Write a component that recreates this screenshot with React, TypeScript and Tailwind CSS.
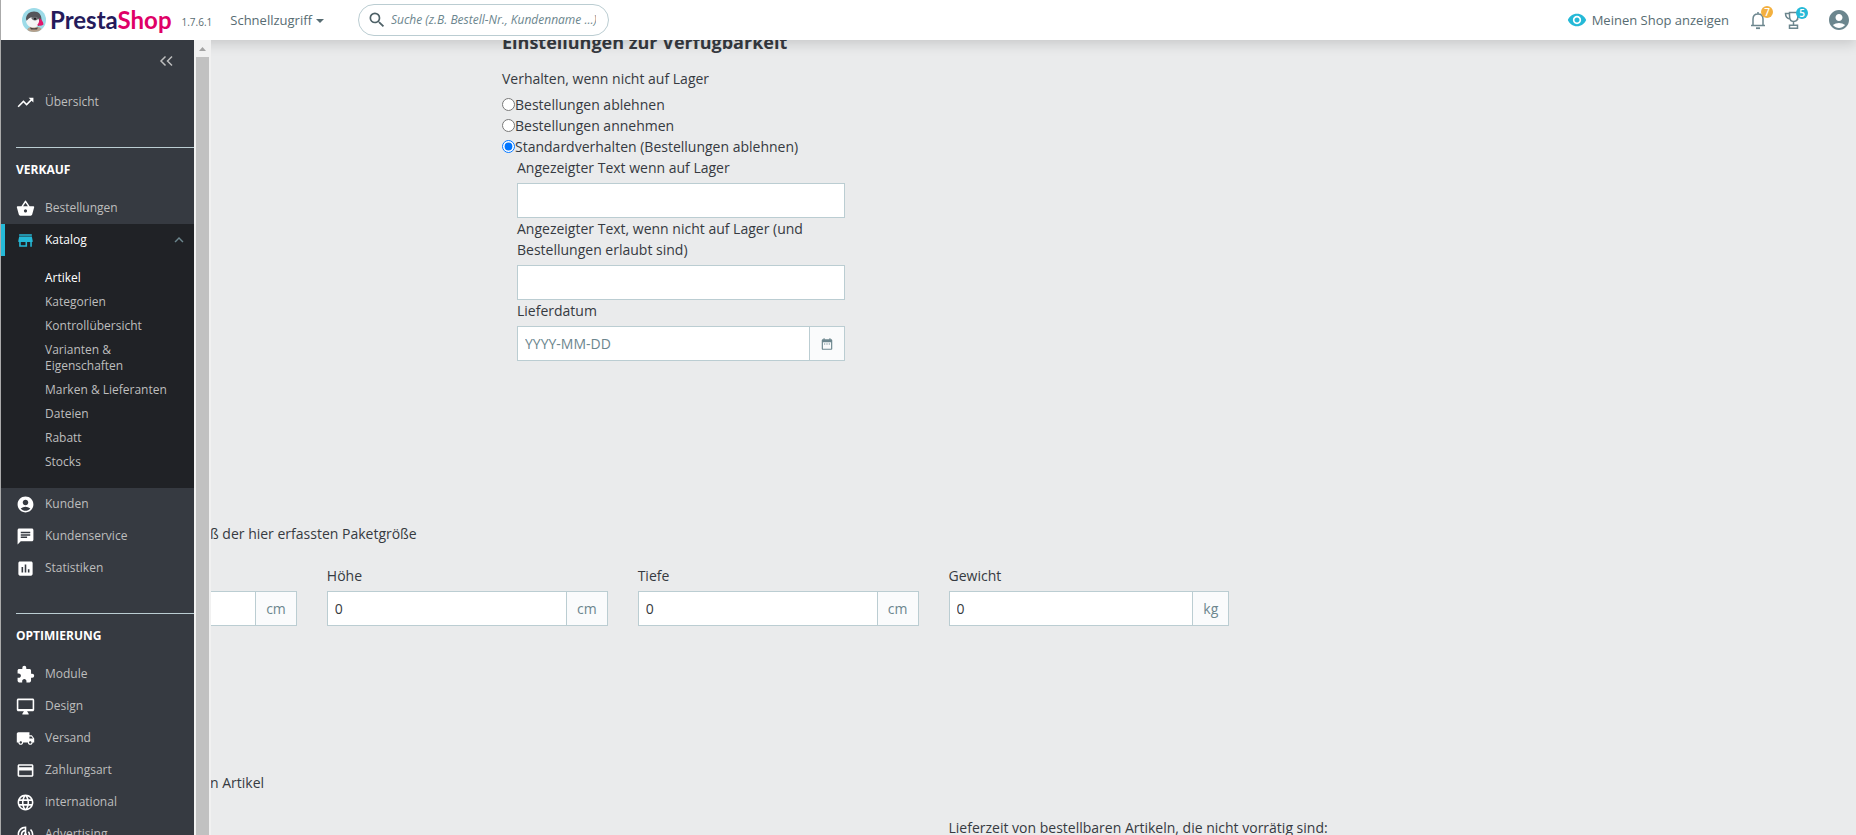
import { useState } from "react";
import type { ComponentType, ReactNode } from "react";
import {
  MdAccountCircle,
  MdAssessment,
  MdChat,
  MdDateRange,
  MdExtension,
  MdKeyboardArrowUp,
  MdLanguage,
  MdLocalShipping,
  MdPayment,
  MdRemoveRedEye,
  MdSearch,
  MdShoppingBasket,
  MdStore,
  MdTrackChanges,
  MdTrendingUp,
} from "react-icons/md";

interface IconProps {
  size?: number;
  className?: string;
}

interface NavItem {
  label: string;
  icon: ComponentType<IconProps>;
  children?: string[];
}

function DesktopIcon({ size = 24, className }: IconProps) {
  return (
    <svg viewBox="0 0 24 24" width={size} height={size} className={className} fill="currentColor">
      <path
        fillRule="evenodd"
        d="M21 2H3c-1.100 0-2 .9-2 2v12c0 1.100.9 2 2 2h7l-2 3v1h8v-1l-2-3h7c1.100 0 2-.9 2-2V4c0-1.100-.9-2-2-2zM21 15H3V4h18z"
      />
    </svg>
  );
}

const saleItems: NavItem[] = [
  { label: "Bestellungen", icon: MdShoppingBasket },
  {
    label: "Katalog",
    icon: MdStore,
    children: [
      "Artikel",
      "Kategorien",
      "Kontrollübersicht",
      "Varianten & Eigenschaften",
      "Marken & Lieferanten",
      "Dateien",
      "Rabatt",
      "Stocks",
    ],
  },
  { label: "Kunden", icon: MdAccountCircle },
  { label: "Kundenservice", icon: MdChat },
  { label: "Statistiken", icon: MdAssessment },
];

const improveItems: NavItem[] = [
  { label: "Module", icon: MdExtension },
  { label: "Design", icon: DesktopIcon },
  { label: "Versand", icon: MdLocalShipping },
  { label: "Zahlungsart", icon: MdPayment },
  { label: "international", icon: MdLanguage },
  { label: "Advertising", icon: MdTrackChanges },
];

const dimensions = [
  { id: "height", label: "Höhe", unit: "cm" },
  { id: "depth", label: "Tiefe", unit: "cm" },
  { id: "weight", label: "Gewicht", unit: "kg" },
];

const stockOptions = [
  "Bestellungen ablehnen",
  "Bestellungen annehmen",
  "Standardverhalten (Bestellungen ablehnen)",
];

function PuffinLogo() {
  return (
    <svg viewBox="0 0 24 24" className="size-6 shrink-0" aria-hidden="true">
      <clipPath id="puffin">
        <circle cx="12" cy="12" r="12" />
      </clipPath>
      <g clipPath="url(#puffin)">
        <rect width="24" height="24" fill="#9ddbe8" />
        <path d="M5 24c0-3 1-4.500 4-5h7c3 .5 4 2 4 5z" fill="#b5a08c" />
        <path d="M4 11C4 6.500 7.500 3.500 12 3.500c5 0 7.500 3.500 7.500 8 0 3-1 5-3 6.500C12 17 5 17 4 11z" fill="#55555a" />
        <path d="M4 13c2-1 3-3.500 6-4 4.500-.5 7.500 1 7.200 5-.3 3.500-2.700 5.500-5.700 5.500-4 0-7-2.500-7.500-6.500z" fill="#f5f5f5" />
        <path d="M9 9.500c3-1.200 6-.8 7.500 1-1 1.300-2 2-3.500 2-1.800 0-3.200-1.200-4-3z" fill="#6a6a6e" />
        <path d="M17.500 10c2 1.500 3.800 3.800 4 6.500-2 1.500-4.300 1.500-6.300.5 1.800-2 2.500-4.200 2.300-7z" fill="#e2186b" />
        <circle cx="13" cy="10.800" r="1.100" fill="#1d1d1f" />
        <path d="M8 19.500c2.500 1 5.500 1 8 0l-1 2H9z" fill="#4a4340" />
      </g>
    </svg>
  );
}

function BellIcon() {
  return (
    <svg viewBox="0 0 18 20" className="h-5 w-[18px]" fill="none" stroke="#6c868e" strokeWidth="1.500">
      <path d="M2 15.500h14M4 15V9c0-3 2-5 5-5s5 2 5 5v6M9 4V2" />
      <path d="M7 18.200h4" strokeWidth="1.800" />
    </svg>
  );
}

function TrophyIcon() {
  return (
    <svg viewBox="0 0 18 20" className="h-5 w-[18px]" fill="none" stroke="#6c868e" strokeWidth="1.500">
      <path d="M5.500 2.500H14v3c0 4-1.500 6-4.500 6s-4-2-4-6zM5.500 3.500h-4c0 3.500 1.500 5 4.500 5.500M14 8.500c-.2 1-1 1.500-1.500 1.500M9.500 11.500V15" />
      <path d="M5.500 15.200h8v3h-8z" />
    </svg>
  );
}

function Header() {
  return (
    <header className="relative z-10 flex h-10 shrink-0 items-center bg-white pr-[5px] pl-[21px] text-[13px] text-[#576c72] shadow-[0_4px_12px_rgba(0,0,0,0.15)]">
      <a href="#home" className="flex items-center gap-1" aria-label="PrestaShop">
        <PuffinLogo />
        <span className="font-['Lato'] text-2xl leading-6 font-bold text-[#251b5b]">
          Presta<span className="text-[#df0067]">Shop</span>
        </span>
      </a>
      <span className="ml-2.5 pt-1 text-[10px]">1.7.6.1</span>
      <button type="button" className="ml-[18px] flex items-center gap-1">
        Schnellzugriff
        <svg viewBox="0 0 8 4" className="mt-0.5 h-1 w-2">
          <path d="M0 0h8L4 4z" fill="#576c72" />
        </svg>
      </button>
      <form className="ml-[34px] flex h-8 w-[251px] items-center gap-1 rounded-full border border-[#bbcdd2] pl-2">
        <MdSearch size={20} className="shrink-0 text-[#4e6167]" />
        <input
          type="search"
          aria-label="Suche"
          placeholder="Suche (z.B. Bestell-Nr., Kundenname ...)"
          className="w-full min-w-0 bg-transparent text-xs italic outline-none placeholder:text-[#6c868e]"
        />
      </form>
      <a href="#shop" className="ml-auto flex items-center gap-[5px]">
        <MdRemoveRedEye size={20} className="text-[#25b9d7]" />
        Meinen Shop anzeigen
      </a>
      <button type="button" aria-label="Benachrichtigungen" className="relative ml-5">
        <BellIcon />
        <span className="absolute -top-1 left-3 flex size-3 items-center justify-center rounded-full bg-[#f3b03f] text-[10px] leading-3 font-semibold text-white">
          7
        </span>
      </button>
      <button type="button" aria-label="Erfolge" className="relative ml-[17px]">
        <TrophyIcon />
        <span className="absolute -top-[3px] left-3 flex size-3 items-center justify-center rounded-full bg-[#25b9d7] text-[10px] leading-3 font-semibold text-white">
          5
        </span>
      </button>
      <button type="button" aria-label="Konto" className="ml-[25px]">
        <MdAccountCircle size={24} className="text-[#6c868e]" />
      </button>
    </header>
  );
}

function NavRow({ item }: { item: NavItem }) {
  const Icon = item.icon;
  const active = Boolean(item.children);

  return (
    <li className={active ? "bg-[#202226]" : ""}>
      <a
        href={`#${item.label}`}
        className={`flex h-8 items-center gap-2.5 border-l-4 pr-1.5 pl-[11px] ${
          active ? "border-[#25b9d7] text-white" : "border-transparent"
        }`}
      >
        <Icon size={19} className={active ? "text-[#25b9d7]" : "text-white"} />
        {item.label}
        {active && <MdKeyboardArrowUp size={18} className="ml-auto text-[#6c868e]" />}
      </a>
      {item.children && (
        <ul className="flex flex-col gap-2 pt-3.5 pr-4 pb-[18px] pl-11 leading-4">
          {item.children.map((child, i) => (
            <li key={child}>
              <a href={`#${child}`} className={i === 0 ? "block text-white" : "block"}>
                {child}
              </a>
            </li>
          ))}
        </ul>
      )}
    </li>
  );
}

function NavSection({ title, items }: { title: string; items: NavItem[] }) {
  return (
    <section className="mt-[29px]">
      <h2 className="ml-[15px] flex h-[45px] items-center border-t border-[#bbcdd2] font-bold text-white">
        {title}
      </h2>
      <ul>
        {items.map((item) => (
          <NavRow key={item.label} item={item} />
        ))}
      </ul>
    </section>
  );
}

function Sidebar() {
  return (
    <aside className="relative z-20 flex w-[210px] shrink-0 overflow-hidden">
      <nav className="flex-1 bg-[#363a41] text-xs text-[#bebebe]">
        <div className="flex h-[46px] justify-end pt-[15px] pr-[21px]">
          <button type="button" aria-label="Menü einklappen" className="h-3">
            <svg viewBox="0 0 14 12" className="h-3 w-3.5" fill="none" stroke="#bebebe" strokeWidth="1.500">
              <path d="M6.500 1.500 2 6l4.500 4.500M13 1.500 8.500 6l4.500 4.500" />
            </svg>
          </button>
        </div>
        <ul>
          <NavRow item={{ label: "Übersicht", icon: MdTrendingUp }} />
        </ul>
        <NavSection title="VERKAUF" items={saleItems} />
        <NavSection title="OPTIMIERUNG" items={improveItems} />
      </nav>
      <div className="flex w-[17px] flex-col items-center bg-[#f1f1f1]" aria-hidden="true">
        <svg viewBox="0 0 17 17" className="size-[17px]">
          <path d="M5 11h7L8.500 7z" fill="#a3a3a3" />
        </svg>
        <div className="w-[13px] flex-1 bg-[#c1c1c1]" />
      </div>
    </aside>
  );
}

function Label({ htmlFor, children }: { htmlFor: string; children: ReactNode }) {
  return (
    <label htmlFor={htmlFor} className="mb-[5px] block">
      {children}
    </label>
  );
}

function InputGroup({
  id,
  label,
  placeholder,
  defaultValue,
  addon,
}: {
  id: string;
  label?: string;
  placeholder?: string;
  defaultValue?: string;
  addon?: ReactNode;
}) {
  return (
    <div className="flex h-[35px] border border-[#bbcdd2] bg-white">
      <input
        id={id}
        type="text"
        aria-label={label}
        placeholder={placeholder}
        defaultValue={defaultValue}
        className="min-w-0 flex-1 px-[7px] outline-none placeholder:text-[#6c868e]"
      />
      {addon && (
        <span className="flex items-center border-l border-[#bbcdd2] bg-[#fafbfc] px-2.5 text-[#6c868e]">
          {addon}
        </span>
      )}
    </div>
  );
}

function Availability() {
  const [selected, setSelected] = useState(2);

  return (
    <section className="-mt-2.5 ml-[291px] w-[343px]">
      <h2 className="mb-3.5 text-lg leading-6 font-bold">Einstellungen zur Verfügbarkeit</h2>
      <fieldset>
        <legend className="mb-[5px]">Verhalten, wenn nicht auf Lager</legend>
        {stockOptions.map((option, i) => (
          <label key={option} className="flex items-center">
            <input
              type="radio"
              name="out_of_stock"
              className="m-0 size-[13px]"
              checked={selected === i}
              onChange={() => setSelected(i)}
            />
            {option}
          </label>
        ))}
      </fieldset>
      <div className="ml-[15px]">
        <Label htmlFor="available_now">Angezeigter Text wenn auf Lager</Label>
        <InputGroup id="available_now" />
        <Label htmlFor="available_later">
          Angezeigter Text, wenn nicht auf Lager (und Bestellungen erlaubt sind)
        </Label>
        <InputGroup id="available_later" />
        <Label htmlFor="available_date">Lieferdatum</Label>
        <InputGroup
          id="available_date"
          placeholder="YYYY-MM-DD"
          addon={<MdDateRange size={14} />}
        />
      </div>
    </section>
  );
}

export default function App() {
  return (
    <div className="flex h-screen flex-col overflow-hidden border-l border-[#aaa] bg-[#eaebec] font-['Open_Sans',sans-serif] text-sm leading-[21px] text-[#363a41]">
      <Header />
      <div className="flex min-h-0 flex-1">
        <Sidebar />
        <main className="min-w-0 flex-1 overflow-hidden">
          <Availability />
          <section className="mt-[162px]">
            <p className="-ml-px">ß der hier erfassten Paketgröße</p>
            {/* the first column runs in under the sidebar */}
            <div className="mt-[21px] mr-[5px] -ml-[195px] grid grid-cols-6 items-end gap-[30px]">
              <InputGroup id="width" label="Breite" addon="cm" />
              {dimensions.map(({ id, label, unit }) => (
                <div key={id}>
                  <Label htmlFor={id}>{label}</Label>
                  <InputGroup id={id} defaultValue="0" addon={unit} />
                </div>
              ))}
            </div>
          </section>
          <section className="mt-[146px]">
            <p className="-ml-px">n Artikel</p>
            <div className="mt-6 mr-[5px] -ml-[195px] grid grid-cols-6 gap-[30px]">
              <p className="col-span-2 col-start-4">
                Lieferzeit von bestellbaren Artikeln, die nicht vorrätig sind:
              </p>
            </div>
          </section>
        </main>
      </div>
    </div>
  );
}
